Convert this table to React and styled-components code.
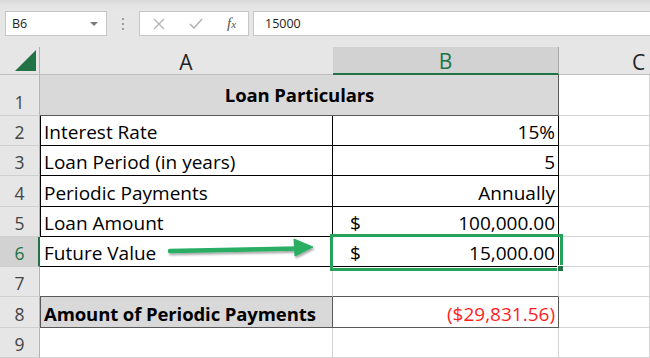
import React from "react";
import styled, { createGlobalStyle } from "styled-components";

const Global = createGlobalStyle`
  html, body { margin: 0; padding: 0; background: #fff; overflow: hidden; }
  * { box-sizing: border-box; }
`;

const GREEN = "#217346";
const GRID = "#d4d4d4";
const INK = "#000";
const DARK = "#595959";

const Page = styled.div`
  position: relative;
  width: 650px;
  height: 358px;
  overflow: hidden;
  font-family: "Open Sans", sans-serif;
`;

const Top = styled.div`
  height: 47px;
  background: linear-gradient(#d9d9d9 0px, #e4e4e4 6px, #e6e6e6 11px);
  padding-top: 11px;
`;

const FormulaBar = styled.div`
  display: flex;
  align-items: center;
  height: 25px;
`;

const Box = styled.div`
  height: 25px;
  background: #fff;
  border: 1px solid #c6c6c6;
  display: flex;
  align-items: center;
  font-size: 12.5px;
  color: #222;
`;

const NameBox = styled(Box)`
  margin-left: 5px;
  width: 102px;
  padding: 0 6px;
  justify-content: space-between;
`;

const Caret = styled.span`
  width: 0;
  height: 0;
  border-left: 4px solid transparent;
  border-right: 4px solid transparent;
  border-top: 4px solid #7a7a7a;
  margin-right: 2px;
`;

const Grip = styled.div`
  width: 32px;
  display: flex;
  flex-direction: column;
  align-items: center;
  gap: 3px;
  span {
    width: 2px;
    height: 2px;
    background: #a0a0a0;
  }
`;

const Buttons = styled(Box)`
  width: 110px;
  padding: 0 0 0 13px;
  gap: 24px;
`;

const Fx = styled.span`
  font-family: "Liberation Serif", serif;
  font-style: italic;
  font-size: 15px;
  color: #555;
  sub {
    font-size: 11px;
    vertical-align: 0;
  }
`;

const Input = styled(Box)`
  margin-left: 4px;
  flex: 1;
  padding-left: 11px;
  border-right: none;
`;

const Row = styled.div`
  display: flex;
  height: ${(p) => p.$h}px;
`;

const Corner = styled.div`
  width: 40px;
  flex: none;
  background: #e6e6e6;
  border-right: 1px solid #b4b4b4;
  border-bottom: 1px solid #bdbdbd;
  display: flex;
  align-items: flex-end;
  justify-content: flex-end;
  padding: 0 3px 3px 0;
`;

const ColHead = styled.div`
  width: ${(p) => p.$w}px;
  flex: none;
  background: ${(p) => (p.$sel ? "#d2d2d2" : "#e6e6e6")};
  color: ${(p) => (p.$sel ? GREEN : "#222")};
  border-right: 1px solid ${(p) => (p.$sel ? "#a8a8a8" : "#e6e6e6")};
  border-bottom: ${(p) => (p.$sel ? `2px solid ${GREEN}` : "1px solid #bdbdbd")};
  font-size: 21px;
  display: flex;
  align-items: center;
  justify-content: center;
  padding-top: 2px;
`;

const RowHead = styled.div`
  width: 40px;
  flex: none;
  background: ${(p) => (p.$sel ? "#d2d2d2" : "#e6e6e6")};
  color: ${(p) => (p.$sel ? GREEN : "#444")};
  border-right: ${(p) => (p.$sel ? `2px solid ${GREEN}` : "1px solid #b4b4b4")};
  border-bottom: 1px solid #cfcfcf;
  font-size: 17.5px;
  display: flex;
  align-items: flex-end;
  justify-content: center;
  padding: 0 0 1px ${(p) => (p.$sel ? 1 : 0)}px;
`;

const Cell = styled.div`
  width: ${(p) => p.$w}px;
  flex: ${(p) => (p.$w ? "none" : 1)};
  background: ${(p) => p.$bg || "#fff"};
  border-right: 1px solid ${(p) => p.$r || GRID};
  border-bottom: 1px solid ${(p) => p.$b || GRID};
  box-shadow: ${(p) => (p.$l ? `inset 1px 0 0 ${p.$l}` : "none")};
  color: ${(p) => p.$color || INK};
  font-weight: ${(p) => (p.$bold ? 700 : 400)};
  font-size: ${(p) => (p.$bold ? 18.5 : 19)}px;
  letter-spacing: ${(p) => (p.$bold ? "-0.1px" : "0")};
  line-height: 20px;
  display: flex;
  align-items: ${(p) => (p.$middle ? "center" : "flex-end")};
  justify-content: ${(p) => p.$align || "flex-start"};
  padding: ${(p) => (p.$middle ? "0 3px 0 4px" : "0 3px 3px 4px")};
  white-space: nowrap;
`;

const Currency = styled.span`
  margin-left: 13px;
  margin-right: auto;
`;

const Overlay = styled.svg`
  position: absolute;
  left: 0;
  top: 0;
  pointer-events: none;
`;

const Selection = styled.div`
  position: absolute;
  left: 330px;
  top: 234px;
  width: 233px;
  height: 37px;
  border: 3px solid #25a35a;
  pointer-events: none;
  &::after {
    content: "";
    position: absolute;
    right: -3px;
    bottom: -3px;
    width: 5px;
    height: 5px;
    background: ${GREEN};
    border-left: 1px solid #fff;
    border-top: 1px solid #fff;
  }
`;

const W = { A: 293, B: 226, C: 160 };

const rows = [
  { n: 2, label: "Interest Rate", value: "15%" },
  { n: 3, label: "Loan Period (in years)", value: "5" },
  { n: 4, label: "Periodic Payments", value: "Annually", h: 31 },
  { n: 5, label: "Loan Amount", value: "100,000.00", cur: true },
  { n: 6, label: "Future Value", value: "15,000.00", cur: true, sel: true },
];

export default function App() {
  return (
    <Page>
      <Global />
      <Top>
        <FormulaBar>
          <NameBox>
            B6
            <Caret />
          </NameBox>
          <Grip>
            <span />
            <span />
            <span />
          </Grip>
          <Buttons>
            <svg width="12" height="12" viewBox="0 0 12 12">
              <path d="M1 1 L11 11 M11 1 L1 11" stroke="#b5b5b5" strokeWidth="1.4" fill="none" />
            </svg>
            <svg width="14" height="12" viewBox="0 0 14 12">
              <path d="M1 6 L5 10 L13 1" stroke="#b5b5b5" strokeWidth="1.6" fill="none" />
            </svg>
            <Fx>
              f<sub>x</sub>
            </Fx>
          </Buttons>
          <Input>15000</Input>
        </FormulaBar>
      </Top>

      <Row $h={28}>
        <Corner>
          <svg width="21" height="21" viewBox="0 0 21 21">
            <polygon points="0,21 21,21 21,0" fill={GREEN} />
          </svg>
        </Corner>
        <ColHead $w={W.A}>A</ColHead>
        <ColHead $w={W.B} $sel>
          B
        </ColHead>
        <ColHead $w={W.C}>C</ColHead>
      </Row>

      <Row $h={41}>
        <RowHead>1</RowHead>
        <Cell $w={W.A + W.B} $bg="#d9d9d9" $r={DARK} $b={DARK} $bold $middle $align="center">
          Loan Particulars
        </Cell>
        <Cell />
      </Row>

      {rows.map((r) => (
        <Row key={r.n} $h={r.h || 30}>
          <RowHead $sel={r.sel}>{r.n}</RowHead>
          <Cell $w={W.A} $r={INK} $b={INK} $l={r.sel ? null : INK}>
            {r.label}
          </Cell>
          <Cell $w={W.B} $r={INK} $b={INK} $align="flex-end">
            {r.cur && <Currency>$</Currency>}
            {r.value}
          </Cell>
          <Cell />
        </Row>
      ))}

      <Row $h={30}>
        <RowHead>7</RowHead>
        <Cell $w={W.A} $b={DARK} />
        <Cell $w={W.B} $r={GRID} $b={DARK} />
        <Cell />
      </Row>

      <Row $h={31}>
        <RowHead>8</RowHead>
        <Cell $w={W.A} $bg="#d9d9d9" $r={DARK} $b={DARK} $l={DARK} $bold>
          Amount of Periodic Payments
        </Cell>
        <Cell $w={W.B} $r={DARK} $b={DARK} $align="flex-end" $color="#ff1e1e">
          ($29,831.56)
        </Cell>
        <Cell />
      </Row>

      <Row $h={30}>
        <RowHead>9</RowHead>
        <Cell $w={W.A} />
        <Cell $w={W.B} />
        <Cell />
      </Row>

      <Overlay width="650" height="358">
        <defs>
          <filter id="shade" x="-10%" y="-50%" width="120%" height="200%">
            <feDropShadow dx="1" dy="2" stdDeviation="1.2" floodColor="#000" floodOpacity="0.35" />
          </filter>
        </defs>
        <g filter="url(#shade)" fill="#2aae63" stroke="#2aae63">
          <line x1="170" y1="251" x2="298" y2="248.5" strokeWidth="4.5" strokeLinecap="round" />
          <polygon points="294,239 313,247 295,256" strokeWidth="1" strokeLinejoin="round" />
        </g>
      </Overlay>
      <Selection />
    </Page>
  );
}
